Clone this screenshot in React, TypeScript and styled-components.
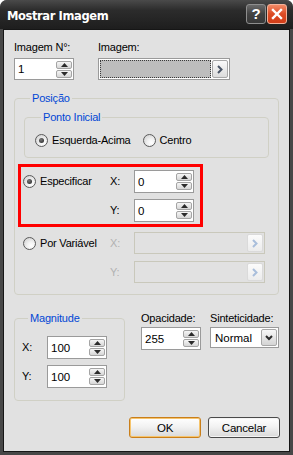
import React from 'react';
import styled, { createGlobalStyle } from 'styled-components';

const GlobalStyle = createGlobalStyle`
  html, body {
    margin: 0;
    padding: 0;
    background: #ffffff;
  }
  body {
    font-family: "Liberation Sans", Arial, sans-serif;
    font-size: 11px;
    letter-spacing: -0.2px;
    color: #000;
  }
`;

const Window = styled.div`
  width: 293px;
  height: 455px;
  box-sizing: border-box;
  display: flex;
  flex-direction: column;
  padding: 0 3px 3px 3px;
  background: #474747;
  border-radius: 7px 7px 0 0;
  overflow: hidden;
`;

const TitleBar = styled.div`
  height: 29px;
  margin: 0 -3px;
  padding: 2px 6px 0 7px;
  box-sizing: border-box;
  display: flex;
  align-items: center;
  background: linear-gradient(#4a4a4a 0%, #2c2c2c 35%, #1e1e1e 100%);
`;

const Title = styled.div`
  flex: 1;
  color: #fff;
  font-family: "DejaVu Sans", "Liberation Sans", sans-serif;
  font-weight: bold;
  font-size: 11.5px;
  letter-spacing: -0.4px;
`;

const CaptionButtons = styled.div`
  display: flex;
  gap: 1px;
  margin-top: -4px;
`;

const CaptionButton = styled.div<{ $variant: 'help' | 'close' }>`
  width: 20px;
  height: 20px;
  box-sizing: border-box;
  border-radius: 3px;
  display: flex;
  align-items: center;
  justify-content: center;
  color: #fff;
  font-weight: bold;
  font-size: 15px;
  border: 1px solid ${({ $variant }) => ($variant === 'close' ? '#f3b39c' : '#8e8e8e')};
  background: ${({ $variant }) =>
    $variant === 'close'
      ? 'linear-gradient(#f28a66, #dc4b25 50%, #d23d18)'
      : 'linear-gradient(#6a6a6a, #424242 50%, #383838)'};
`;

const Body = styled.div`
  flex: 1;
  display: flex;
  flex-direction: column;
  background: #e1e1e1;
  border: 1px solid #161616;
  padding: 11px 10px 13px 10px;
`;

const TopRow = styled.div`
  display: flex;
  gap: 24px;
`;

const Field = styled.div`
  display: flex;
  flex-direction: column;
  gap: 4px;
`;

const Label = styled.span<{ $disabled?: boolean }>`
  line-height: 13px;
  white-space: nowrap;
  color: ${({ $disabled }) => ($disabled ? '#b2b2b2' : '#000')};
`;

const SpinBox = styled.div<{ $height?: number }>`
  width: 60px;
  height: ${({ $height }) => $height ?? 22}px;
  box-sizing: border-box;
  border: 1px solid #9a9a9a;
  background: #fff;
  display: flex;
  align-items: center;
  padding: 0 1px 0 3px;
`;

const Value = styled.span`
  flex: 1;
  font-size: 11.5px;
  letter-spacing: 0;
`;

const SpinButtons = styled.div`
  display: flex;
  flex-direction: column;
  gap: 1px;
`;

const SpinButton = styled.div`
  width: 16px;
  height: 8px;
  box-sizing: border-box;
  border: 1px solid #a4a4a4;
  border-radius: 2px;
  background: linear-gradient(#f6f6f6, #d6d6d6);
  display: flex;
  align-items: center;
  justify-content: center;
`;

const PickerBox = styled.div<{ $width: number; $disabled?: boolean }>`
  width: ${({ $width }) => $width}px;
  height: 22px;
  box-sizing: border-box;
  border: 1px solid ${({ $disabled }) => ($disabled ? '#c9c8bb' : '#9a9a9a')};
  background: ${({ $disabled }) => ($disabled ? '#e1e1e1' : '#fff')};
  display: flex;
  padding: 1px;
  gap: 1px;
`;

const DottedArea = styled.div`
  flex: 1;
  background: #bdbdbd;
  border: 1px dotted #3a3a3a;
`;

const PickButton = styled.div<{ $disabled?: boolean }>`
  width: 16px;
  box-sizing: border-box;
  border: 1px solid ${({ $disabled }) => ($disabled ? '#dadada' : '#a8a8a8')};
  border-radius: 2px;
  background: ${({ $disabled }) =>
    $disabled ? 'linear-gradient(#fbfbfb, #ececec)' : 'linear-gradient(#fafafa, #dcdcdc)'};
  display: flex;
  align-items: center;
  justify-content: center;
  margin-left: auto;
`;

const Group = styled.fieldset<{ $pad: string; $width?: number }>`
  margin: 0;
  border: 1px solid #d0d0c5;
  border-radius: 4px;
  padding: ${({ $pad }) => $pad};
  min-width: 0;
  ${({ $width }) => ($width ? `width: ${$width}px; box-sizing: border-box;` : '')}
`;

const Legend = styled.legend`
  color: #0046d5;
  padding: 0 2px;
  margin-left: 6px;
  line-height: 13px;
`;

const PositionGroup = styled(Group)`
  margin-top: 12px;
`;

const RadioRow = styled.div`
  display: flex;
  gap: 12px;
`;

const RadioItem = styled.label`
  display: flex;
  align-items: center;
  gap: 4px;
  line-height: 13px;
  white-space: nowrap;
`;

const RadioCircle = styled.span<{ $checked?: boolean }>`
  width: 13px;
  height: 13px;
  box-sizing: border-box;
  border-radius: 50%;
  border: 1px solid #5a5a5a;
  background: radial-gradient(circle at 65% 70%, #ffffff 0%, #f2f2f2 35%, #c9c9c9 100%);
  display: flex;
  align-items: center;
  justify-content: center;

  &::after {
    content: '';
    width: 5px;
    height: 5px;
    border-radius: 50%;
    background: ${({ $checked }) => ($checked ? 'radial-gradient(circle at 40% 35%, #777, #222)' : 'transparent')};
  }
`;

const ModeBlock = styled.div<{ $highlight?: boolean; $valueWidth: number }>`
  display: grid;
  grid-template-columns: 87px 24px ${({ $valueWidth }) => $valueWidth}px;
  align-items: center;
  width: fit-content;
  margin-left: -6px;
  border: 3px solid ${({ $highlight }) => ($highlight ? '#ff0000' : 'transparent')};
  margin-top: ${({ $highlight }) => ($highlight ? 6 : 0)}px;
  padding: ${({ $highlight }) => ($highlight ? '3px 6px 2px 2px' : '2px 0 0 2px')};
  row-gap: ${({ $highlight }) => ($highlight ? 6 : 7)}px;
`;

const BottomRow = styled.div`
  display: flex;
  align-items: flex-start;
  margin-top: 17px;
`;

const SizeGrid = styled.div`
  display: grid;
  grid-template-columns: 25px 60px;
  align-items: center;
  row-gap: 6px;
`;

const Column = styled.div<{ $offset: number }>`
  display: flex;
  flex-direction: column;
  gap: 2px;
  margin-left: ${({ $offset }) => $offset}px;
`;

const Select = styled.div`
  width: 69px;
  height: 21px;
  box-sizing: border-box;
  border: 1px solid #9a9a9a;
  background: #fff;
  display: flex;
  align-items: center;
  padding: 1px;
`;

const SelectText = styled.span`
  flex: 1;
  padding-left: 3px;
  font-size: 11.5px;
  letter-spacing: 0;
`;

const DropButton = styled.div`
  width: 16px;
  height: 17px;
  box-sizing: border-box;
  border: 1px solid #a8a8a8;
  border-radius: 2px;
  background: linear-gradient(#f8f8f8, #d4d4d4);
  display: flex;
  align-items: center;
  justify-content: center;
`;

const ButtonRow = styled.div`
  margin-top: auto;
  margin-right: -1px;
  display: flex;
  justify-content: flex-end;
  gap: 7px;
`;

const Button = styled.button<{ $default?: boolean }>`
  width: 72px;
  height: 21px;
  box-sizing: border-box;
  font-family: "Liberation Sans", Arial, sans-serif;
  font-size: 11.5px;
  letter-spacing: -0.2px;
  color: #000;
  padding: 0;
  border-radius: 3px;
  border: 1px solid ${({ $default }) => ($default ? '#c97e1a' : '#4a4a4a')};
  background: linear-gradient(#ffffff, #f2f2f2 45%, #d9d9d9);
  box-shadow: ${({ $default }) => ($default ? 'inset 0 0 0 1px #f6c46c' : 'inset 0 0 0 1px #f4f4f4')};
`;

const Triangle = ({ up }: { up?: boolean }) => (
  <svg width="7" height="4" viewBox="0 0 7 4">
    <polygon points={up ? '3.5,0 7,4 0,4' : '0,0 7,0 3.5,4'} fill="#2b2b2b" />
  </svg>
);

const Chevron = ({ color }: { color: string }) => (
  <svg width="6" height="9" viewBox="0 0 6 9">
    <polyline points="1,1 4.5,4.5 1,8" fill="none" stroke={color} strokeWidth="2" />
  </svg>
);

const Spin = ({ value, height }: { value: string; height?: number }) => (
  <SpinBox $height={height}>
    <Value>{value}</Value>
    <SpinButtons>
      <SpinButton><Triangle up /></SpinButton>
      <SpinButton><Triangle /></SpinButton>
    </SpinButtons>
  </SpinBox>
);

const App: React.FC = () => {
  return (
    <>
      <GlobalStyle />
      <Window>
        <TitleBar>
          <Title>Mostrar Imagem</Title>
          <CaptionButtons>
            <CaptionButton $variant="help">?</CaptionButton>
            <CaptionButton $variant="close">
              <svg width="12" height="12" viewBox="0 0 12 12">
                <path d="M2 2 L10 10 M10 2 L2 10" stroke="#fff" strokeWidth="2.4" strokeLinecap="square" />
              </svg>
            </CaptionButton>
          </CaptionButtons>
        </TitleBar>
        <Body>
          <TopRow>
            <Field>
              <Label>Imagem N°:</Label>
              <Spin value="1" />
            </Field>
            <Field>
              <Label>Imagem:</Label>
              <PickerBox $width={132}>
                <DottedArea />
                <PickButton><Chevron color="#4a5567" /></PickButton>
              </PickerBox>
            </Field>
          </TopRow>

          <PositionGroup $pad="6px 9px 8px 9px">
            <Legend>Posição</Legend>
            <Group $pad="10px 10px 10px 10px">
              <Legend>Ponto Inicial</Legend>
              <RadioRow>
                <RadioItem><RadioCircle $checked />Esquerda-Acima</RadioItem>
                <RadioItem><RadioCircle />Centro</RadioItem>
              </RadioRow>
            </Group>

            <ModeBlock $highlight $valueWidth={60}>
              <RadioItem><RadioCircle $checked />Especificar</RadioItem>
              <Label>X:</Label>
              <Spin value="0" height={23} />
              <span />
              <Label>Y:</Label>
              <Spin value="0" height={23} />
            </ModeBlock>

            <ModeBlock $valueWidth={131}>
              <RadioItem><RadioCircle />Por Variável</RadioItem>
              <Label $disabled>X:</Label>
              <PickerBox $width={131} $disabled>
                <PickButton $disabled><Chevron color="#a9bedb" /></PickButton>
              </PickerBox>
              <span />
              <Label $disabled>Y:</Label>
              <PickerBox $width={131} $disabled>
                <PickButton $disabled><Chevron color="#a9bedb" /></PickButton>
              </PickerBox>
            </ModeBlock>
          </PositionGroup>

          <BottomRow>
            <Group $pad="11px 0 12px 7px" $width={113}>
              <Legend>Magnitude</Legend>
              <SizeGrid>
                <Label>X:</Label>
                <Spin value="100" height={23} />
                <Label>Y:</Label>
                <Spin value="100" height={23} />
              </SizeGrid>
            </Group>
            <Column $offset={16}>
              <Label>Opacidade:</Label>
              <Spin value="255" height={23} />
            </Column>
            <Column $offset={9}>
              <Label>Sinteticidade:</Label>
              <Select>
                <SelectText>Normal</SelectText>
                <DropButton>
                  <svg width="8" height="6" viewBox="0 0 8 6">
                    <polyline points="1,1 4,4 7,1" fill="none" stroke="#2b2b2b" strokeWidth="2" />
                  </svg>
                </DropButton>
              </Select>
            </Column>
          </BottomRow>

          <ButtonRow>
            <Button $default>OK</Button>
            <Button>Cancelar</Button>
          </ButtonRow>
        </Body>
      </Window>
    </>
  );
};

export default App;
